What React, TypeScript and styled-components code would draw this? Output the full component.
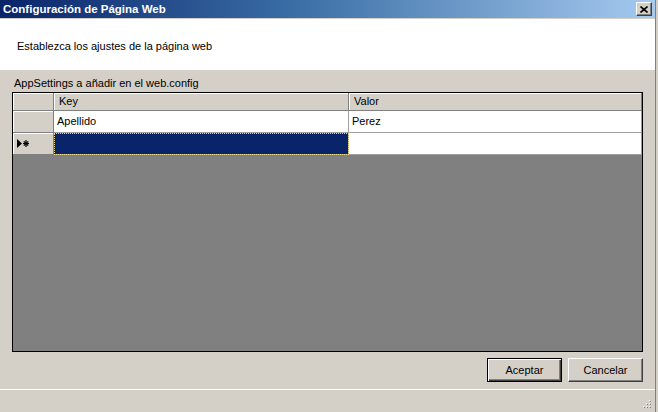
import styled, { createGlobalStyle } from "styled-components";

const GlobalStyle = createGlobalStyle`
  html, body {
    margin: 0;
    padding: 0;
    background: #d4d0c8;
  }
  body {
    font-family: "Liberation Sans", Arial, sans-serif;
    font-size: 11px;
  }
`;

const Window = styled.div`
  width: 655px;
  height: 412px;
  display: flex;
  flex-direction: column;
  background: #d4d0c8;
  border-right: 1px solid #808080;
  overflow: hidden;
  color: #000;
`;

const TitleBar = styled.div`
  height: 18px;
  flex-shrink: 0;
  display: flex;
  align-items: center;
  justify-content: space-between;
  padding: 0 3px 0 3px;
  background: linear-gradient(to right, #0a246a 0%, #3a6ea5 45%, #a6caf0 100%);
  border-bottom: 1px solid #d4d0c8;
`;

const Title = styled.span`
  color: #fff;
  font-weight: bold;
  font-size: 11.5px;
  line-height: 18px;
`;

const CloseButton = styled.div`
  width: 16px;
  height: 14px;
  box-sizing: border-box;
  background: #d4d0c8;
  border-top: 1px solid #fff;
  border-left: 1px solid #fff;
  border-right: 1px solid #404040;
  border-bottom: 1px solid #404040;
  box-shadow: inset -1px -1px 0 #808080;
  display: flex;
  align-items: center;
  justify-content: center;
`;

const HeaderPanel = styled.div`
  height: 51px;
  flex-shrink: 0;
  background: #fff;
  display: flex;
  align-items: center;
  padding-left: 17px;
  padding-top: 2px;
  box-sizing: border-box;
`;

const Body = styled.div`
  flex: 1;
  display: flex;
  flex-direction: column;
  padding: 0 12px;
`;

const Label = styled.div`
  height: 22px;
  padding: 6px 0 0 2px;
  box-sizing: border-box;
  line-height: 14px;
`;

const Grid = styled.div`
  width: 631px;
  height: 260px;
  box-sizing: border-box;
  border: 1px solid #000;
  background: #808080;
  display: flex;
  flex-direction: column;
`;

const Row = styled.div`
  display: grid;
  grid-template-columns: 41px 295px 1fr;
`;

const HeadCell = styled.div`
  height: 18px;
  box-sizing: border-box;
  background: #d4d0c8;
  border-right: 1px solid #808080;
  border-bottom: 1px solid #808080;
  box-shadow: inset 1px 1px 0 #fff;
  padding-left: 5px;
  line-height: 17px;
`;

const RowHead = styled.div`
  height: 22px;
  box-sizing: border-box;
  background: #d4d0c8;
  border-right: 1px solid #808080;
  border-bottom: 1px solid #808080;
  box-shadow: inset 1px 1px 0 #fff;
  display: flex;
  align-items: center;
  padding-left: 4px;
`;

const Cell = styled.div<{ $selected?: boolean }>`
  height: 22px;
  box-sizing: border-box;
  background: ${(p) => (p.$selected ? "#0a246a" : "#fff")};
  border-right: 1px solid #a0a0a0;
  border-bottom: 1px solid #a0a0a0;
  outline: ${(p) => (p.$selected ? "1px dotted #e8d890" : "none")};
  outline-offset: -1px;
  padding-left: 3px;
  line-height: 21px;
`;

const ButtonRow = styled.div`
  display: flex;
  justify-content: flex-end;
  gap: 6px;
  padding: 6px 0 7px 0;
`;

const Button = styled.div<{ $default?: boolean }>`
  width: 75px;
  height: 24px;
  box-sizing: border-box;
  background: #d4d0c8;
  display: flex;
  align-items: center;
  justify-content: center;
  border: 1px solid ${(p) => (p.$default ? "#000" : "transparent")};
  border-top-color: ${(p) => (p.$default ? "#000" : "#fff")};
  border-left-color: ${(p) => (p.$default ? "#000" : "#fff")};
  border-right-color: ${(p) => (p.$default ? "#000" : "#404040")};
  border-bottom-color: ${(p) => (p.$default ? "#000" : "#404040")};
  box-shadow: ${(p) =>
    p.$default
      ? "inset 1px 1px 0 #fff, inset -1px -1px 0 #404040, inset -2px -2px 0 #808080"
      : "inset -1px -1px 0 #808080"};
`;

const StatusStrip = styled.div`
  flex: 1;
  border-top: 1px solid #fff;
  margin: 0 -12px;
  display: flex;
  justify-content: flex-end;
  align-items: flex-end;
  padding: 0 3px 3px 0;
`;

const NewRowGlyph = () => (
  <svg width="13" height="9" viewBox="0 0 13 9">
    <polygon points="0,0 5,4.5 0,9" fill="#000" />
    <g stroke="#000" strokeWidth="1.2">
      <line x1="6" y1="4.5" x2="12" y2="4.5" />
      <line x1="9" y1="1" x2="9" y2="8" />
      <line x1="6.8" y1="2.3" x2="11.2" y2="6.7" />
      <line x1="11.2" y1="2.3" x2="6.8" y2="6.7" />
    </g>
  </svg>
);

const Grip = () => {
  const dots: [number, number][] = [
    [9, 1],
    [6, 4],
    [9, 4],
    [3, 7],
    [6, 7],
    [9, 7],
  ];
  return (
    <svg width="12" height="10" viewBox="0 0 12 10">
      {dots.map(([x, y]) => (
        <g key={`${x}-${y}`}>
          <rect x={x} y={y} width="1" height="1" fill="#fff" />
          <rect x={x + 1} y={y + 1} width="1" height="1" fill="#808080" />
        </g>
      ))}
    </svg>
  );
};

export default function App() {
  return (
    <>
      <GlobalStyle />
      <Window>
        <TitleBar>
          <Title>Configuración de Página Web</Title>
          <CloseButton>
            <svg width="8" height="7" viewBox="0 0 8 7">
              <path d="M0.5 0.5 L7.5 6.5 M7.5 0.5 L0.5 6.5" stroke="#000" strokeWidth="1.6" />
            </svg>
          </CloseButton>
        </TitleBar>
        <HeaderPanel>Establezca los ajustes de la página web</HeaderPanel>
        <Body>
          <Label>AppSettings a añadir en el web.config</Label>
          <Grid>
            <Row>
              <HeadCell />
              <HeadCell>Key</HeadCell>
              <HeadCell>Valor</HeadCell>
            </Row>
            <Row>
              <RowHead />
              <Cell>Apellido</Cell>
              <Cell>Perez</Cell>
            </Row>
            <Row>
              <RowHead>
                <NewRowGlyph />
              </RowHead>
              <Cell $selected />
              <Cell />
            </Row>
          </Grid>
          <ButtonRow>
            <Button $default>Aceptar</Button>
            <Button>Cancelar</Button>
          </ButtonRow>
          <StatusStrip>
            <Grip />
          </StatusStrip>
        </Body>
      </Window>
    </>
  );
}
